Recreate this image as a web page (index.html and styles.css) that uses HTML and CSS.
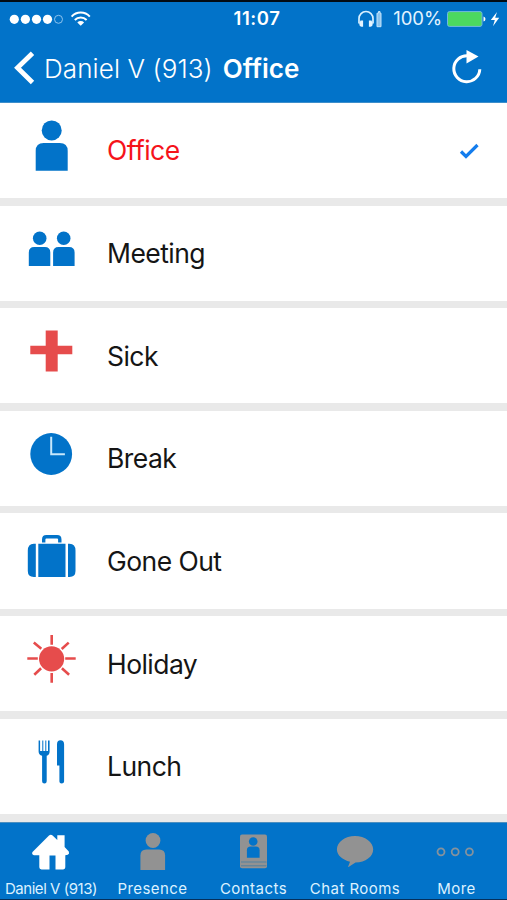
FILE: index.html
```html
<!DOCTYPE html>
<html lang="en">
<head>
<meta charset="utf-8">
<title>Presence</title>
<link rel="stylesheet" href="styles.css">
</head>
<body>
<div class="phone">
  <header class="header">
    <div class="status">
      <svg class="signal" width="84" height="24" viewBox="0 0 84 24">
        <g fill="#fff"><circle cx="6.3" cy="12.3" r="4.6"/><circle cx="17.4" cy="12.3" r="4.6"/><circle cx="28.5" cy="12.3" r="4.6"/><circle cx="39.5" cy="12.3" r="4.6"/></g>
        <circle cx="50.5" cy="12.3" r="4" fill="none" stroke="#8fc4ee"/>
        <g fill="none" stroke="#fff" stroke-width="2"><path d="M63.6 9.6a12.3 12.3 0 0 1 18.2 0M66.8 13a8.2 8.2 0 0 1 11.8 0"/></g>
        <path d="M69.3 15.4a4.8 4.8 0 0 1 6.8 0l-3.4 3.4z" fill="#fff"/>
      </svg>
      <time class="clock">11:07</time>
      <div class="power">
        <svg width="28" height="20" viewBox="0 0 28 20">
          <path d="M3 14.5V9.5a7 7 0 0 1 14 0v5" fill="none" stroke="#d9f0ff" stroke-width="1.7"/>
          <path d="M4.5 11.5h2.6v6.2H5.4q-2.2-.5-2.2-3zM15.5 11.5h-2.6v6.2h1.7q2.2-.5 2.2-3z" fill="#e5f4ff"/>
          <path d="M22.5 2.500h1.500v1.700h1v13.500h-4V4.200h1.500z" fill="#d9f0ff" fill-opacity=".65" stroke="#c4e4fc"/>
        </svg>
        <span class="percent">100%</span>
        <svg width="54" height="20" viewBox="0 0 54 20">
          <rect x="1.500" y="2.600" width="34.500" height="14.800" rx="2" fill="#4cd95f" stroke="#71b8df"/>
          <path d="M37.500 7.500q2 .5 2 2.500t-2 2.500z" fill="#fff"/>
          <path d="M51 3L44.800 11h4L47 17.200 53.200 8.800h-4z" fill="#fff"/>
        </svg>
      </div>
    </div>
    <nav class="nav">
      <svg class="back" width="24" height="36" viewBox="0 0 24 36"><path d="M21.500 3.200L6.500 17.800l15 14.700" fill="none" stroke="#fff" stroke-width="4.800"/></svg>
      <span class="who">Daniel V (913)</span>
      <h1 class="title">Office</h1>
      <svg class="reload" width="32" height="36" viewBox="0 0 32 36"><path d="M16.500 5.700a13 13 0 1 0 12.300 13.500" fill="none" stroke="#fff" stroke-width="3"/><path d="M15.500 0v13.600L27.500 6.500z" fill="#fff"/></svg>
    </nav>
  </header>

  <main class="list">
    <div class="row selected">
      <svg class="icon" viewBox="0 0 100 95" fill="#0273c9"><circle cx="51.700" cy="27.400" r="10"/><path d="M35.700 67.800V48q0-8 8-8h16q8 0 8 8v19.800z"/></svg>
      <span class="label">Office</span>
      <svg class="check" width="24" height="20" viewBox="0 0 24 20"><path d="M3 9.500l5 5L19.500 3" fill="none" stroke="#147ded" stroke-width="3.200"/></svg>
    </div>
    <div class="row">
      <svg class="icon" viewBox="0 0 100 95" fill="#0273c9"><circle cx="39.700" cy="32.300" r="6.800"/><circle cx="63.700" cy="32.300" r="6.800"/><path d="M28.800 59.900V46.500q0-5.500 5.500-5.500h10.500q5.500 0 5.500 5.500v13.400zM53.100 59.900V46.500q0-5.500 5.500-5.500H69q5.600 0 5.600 5.500v13.400z"/></svg>
      <span class="label">Meeting</span>
    </div>
    <div class="row">
      <svg class="icon" viewBox="0 0 100 95" fill="#e64c4c"><path d="M45.700 22.500h12v15.200h14.600v8.600H57.700v17.300h-12V46.300H30.300v-8.600h15.400z"/></svg>
      <span class="label">Sick</span>
    </div>
    <div class="row">
      <svg class="icon" viewBox="0 0 100 95"><circle cx="51.200" cy="43" r="20.900" fill="#0273c9"/><path d="M51.200 25.700v17.600h13.700" fill="none" stroke="#c7e8fb" stroke-width="2"/></svg>
      <span class="label">Break</span>
    </div>
    <div class="row">
      <svg class="icon" viewBox="0 0 100 95" fill="#0273c9"><path d="M43.700 29.500v-3q0-2.700 2.700-2.700h10.700q2.700 0 2.700 2.700v3" fill="none" stroke="#0273c9" stroke-width="3.400"/><path d="M38.300 30.700h27.200v33.200H38.300zM35.800 30.700v33.200h-2q-6-.2-6-6V37.400q0-6.300 6-6.700zM68 30.700v33.200h1.500q6-.2 6-6V37.400q0-6.300-6-6.700z"/></svg>
      <span class="label">Gone Out</span>
    </div>
    <div class="row">
      <svg class="icon" viewBox="0 0 100 95"><circle cx="51.600" cy="42.800" r="12.600" fill="#e64c4c"/><path d="M51.700 18.900v9.800M51.700 57v9.700M27.300 42.500h10.500M65.200 42.500h10.500M33.800 26.600l7.500 6.200M61.700 33l7-6.400M34.300 58.700l6.800-6.500M61.900 52.200l7.200 6.500" fill="none" stroke="#e64c4c" stroke-width="2.600"/></svg>
      <span class="label">Holiday</span>
    </div>
    <div class="row">
      <svg class="icon" viewBox="0 0 100 95" fill="#0273c9"><path d="M38.600 21.500h1.500V32h2.200V21.500h1V32h2V21.500h1V32H48V21.500h1.600v11q0 3.500-2.900 4.300v25.500q0 2.200-2.300 2.200t-2.300-2.200V36.800q-3.500-1-3.500-4.300zM57 46.500V25.200q0-4 3.500-4t3.600 4v37q0 2.300-2.400 2.300t-2.300-2.300V46.500z"/></svg>
      <span class="label">Lunch</span>
    </div>
  </main>

  <footer class="tabs">
    <div class="tab home">
      <svg width="42" height="38" viewBox="0 0 42 38" fill="#fff"><path d="M2.500 20L19 3.500q1.800-1.600 3.600 0L27.300 8V3.200h7.300V15l4.200 4.600q1 2.200-1 3.100l-2.500.5v12.100q0 2.100-2.100 2.100h-7.700V23.600h-6V37.400h-8q-2.200 0-2.200-2.100V23.200H4q-2.700-.8-1.500-3.200z"/></svg>
      <span>Daniel V (913)</span>
    </div>
    <div class="tab">
      <svg width="42" height="38" viewBox="0 0 42 38" fill="#929292"><circle cx="21" cy="8.500" r="7.400"/><path d="M8.400 38V23.500q0-6 6-6h12.700q6 0 6 6V38z"/></svg>
      <span>Presence</span>
    </div>
    <div class="tab">
      <svg width="42" height="38" viewBox="0 0 42 38"><path d="M9 2.500h23q2 0 2 2v29.800q0 2-2 2H9q-2 0-2-2V4.500q0-2 2-2z" fill="#929292"/><g fill="#0273c9"><circle cx="20.200" cy="9.500" r="4.300"/><path d="M13.900 25.700v-7.500q0-3.700 3.700-3.700h5.300q3.700 0 3.700 3.700v7.500z"/></g><path d="M8 30h25.500M8 33.800h25.500" stroke="#52819f" fill="none"/></svg>
      <span>Contacts</span>
    </div>
    <div class="tab">
      <svg width="42" height="38" viewBox="0 0 42 38"><path d="M21 3.900c10 0 18.200 6 18.200 13.400S31.500 30.400 21.500 30.600l-7 4.500q-.6 0-.3-.7l1.800-4.700C8.500 28 2.900 23.400 2.900 17.300 2.900 9.900 11 3.900 21 3.900z" fill="#929292"/></svg>
      <span>Chat Rooms</span>
    </div>
    <div class="tab">
      <svg width="42" height="38" viewBox="0 0 42 38" fill="none" stroke="#85929d" stroke-width="1.800"><circle cx="5" cy="19.800" r="3.500"/><circle cx="19.200" cy="19.800" r="3.500"/><circle cx="33.400" cy="19.800" r="3.500"/></svg>
      <span>More</span>
    </div>
  </footer>
</div>
</body>
</html>
```
FILE: styles.css
```css
* { box-sizing: border-box; }
body { margin: 0; font-family: Inter, "Liberation Sans", sans-serif; }
svg { display: block; flex: none; }
.phone { width: 507px; height: 900px; display: flex; flex-direction: column; overflow: hidden; background: #e9e9e9; border-bottom: 1px solid #05305c; }
.header { height: 102.900px; flex: none; background: #0273c9; border-top: 2px solid #020b14; border-bottom: 1px solid #3d8ecb; color: #fff; }
.status { height: 32px; display: grid; grid-template-columns: 1fr auto 1fr; align-items: center; padding: 1px 7px 0 8px; }
.clock { font-size: 18.500px; font-weight: 600; line-height: 24px; letter-spacing: .6px; margin-left: 6px; padding-bottom: 2px; }
.power { display: flex; align-items: center; justify-content: flex-end; }
.percent { font-size: 18.500px; line-height: 24px; letter-spacing: -.1px; margin: 0 4px 2px 9px; color: #e4f3ff; }
.nav { height: 68px; display: flex; align-items: center; padding: 0 24px 0 11px; white-space: nowrap; }
.who { font-size: 26px; font-weight: 300; letter-spacing: .1px; margin-left: 9px; padding-top: 2px; line-height: 34px; }
.title { margin: 0 0 0 10px; padding-top: 2px; font-size: 26px; font-weight: 600; line-height: 34px; }
.reload { margin-left: auto; }
.list { display: grid; grid-auto-rows: 95.200px; row-gap: 7.450px; flex: 1; }
.row { background: #fff; display: flex; align-items: center; padding-right: 25px; color: #151515; }
.icon { width: 100px; height: 95px; }
.label { margin-left: 7px; font-size: 26.500px; letter-spacing: -.55px; line-height: 32px; }
.selected { color: #f5131b; }
.check { margin: 3px 0 0 auto; }
.tabs { height: 77.500px; flex: none; background: #0273c9; border-top: 1px solid #4c8fc0; display: grid; grid-template-columns: 102px 101px 101px 102px 101px; color: #dcf1ff; }
.tab { display: flex; flex-direction: column; align-items: center; padding-top: 9px; white-space: nowrap; font-size: 15px; letter-spacing: .45px; line-height: 20px; }
.home { letter-spacing: -.45px; }
.tab span { margin-top: 9px; }
```
